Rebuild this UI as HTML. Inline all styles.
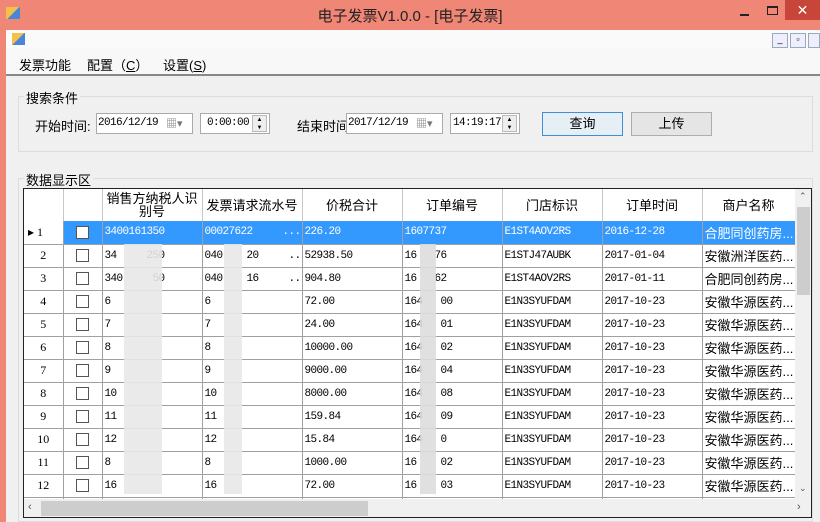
<!DOCTYPE html>
<html><head><meta charset="utf-8"><style>
*{margin:0;padding:0;box-sizing:border-box}
body{width:820px;height:522px;overflow:hidden;background:#f08676;font-family:"Liberation Sans","Noto Sans CJK SC",sans-serif;font-size:12px;position:relative;color:#000}
.a{position:absolute;white-space:nowrap}
.mono{font-family:"Liberation Mono","Noto Sans CJK SC",monospace;font-size:11px;letter-spacing:-0.6px}
table{border-collapse:collapse;table-layout:fixed}
td{height:23px;border-right:1px solid #a0a0a0;border-bottom:1px solid #a0a0a0;padding-left:2px;white-space:nowrap;overflow:hidden;font-family:"Liberation Mono","Noto Sans CJK SC",monospace;font-size:11px;letter-spacing:-0.6px;background:#fff}
td.rh{background:#fff;text-align:center;padding:0;font-family:"Liberation Serif",serif;font-size:12px;letter-spacing:0}
td.cb{text-align:center;padding:0}
.box{display:inline-block;width:13px;height:13px;border:1px solid #555;background:#fff;vertical-align:middle}
tr.sel td{background:#3399ff;color:#fff}
tr.sel td.rh{background:#fff;color:#000;text-align:left;padding-left:4px}
tr.sel td.cb{background:#3399ff}
td.nm{font-family:"Liberation Sans","Noto Sans CJK SC",sans-serif;font-size:13px;letter-spacing:0}
th{height:32px;border-right:1px solid #c8c8c8;font-weight:normal;font-size:13px;background:#fff;line-height:13px}
.blur{position:absolute;background:#e8e8e8;opacity:.9}
</style></head><body>
<div class="a" style="left:6px;top:7px;width:14px;height:12px;background:linear-gradient(135deg,#f4c04a 50%,#4a86d8 50%)"></div>
<div class="a" style="left:0;top:5px;width:820px;text-align:center;font-size:15px;color:#222">电子发票V1.0.0 - [电子发票]</div>
<div class="a" style="left:740px;top:14px;width:9px;height:2px;background:#222"></div>
<div class="a" style="left:767px;top:6px;width:11px;height:9px;border:1px solid #222;border-top-width:2px"></div>
<div class="a" style="left:785px;top:0;width:35px;height:20px;background:#c8453a;color:#fff;text-align:center;font-size:14px;line-height:20px">✕</div>
<div class="a" style="left:6px;top:30px;width:814px;height:492px;background:#f0f0f0"></div>
<div class="a" style="left:6px;top:30px;width:814px;height:19px;background:#fafafa"></div>
<div class="a" style="left:12px;top:33px;width:13px;height:12px;background:linear-gradient(135deg,#f4c04a 50%,#4a86d8 50%)"></div>
<div class="a" style="left:772px;top:33px;width:16px;height:15px;border:1px solid #9ab;background:#eef;font-size:9px;text-align:center">_</div>
<div class="a" style="left:790px;top:33px;width:16px;height:15px;border:1px solid #9ab;background:#eef;font-size:9px;text-align:center">▫</div>
<div class="a" style="left:808px;top:33px;width:12px;height:15px;border:1px solid #9ab;background:#eef"></div>
<div class="a" style="left:6px;top:49px;width:814px;height:27px;background:#f8f8f8;border-bottom:2px solid #888"></div>
<div class="a" style="left:19px;top:55px;font-size:13px">发票功能</div>
<div class="a" style="left:87px;top:55px;font-size:13px">配置（<u>C</u>）</div>
<div class="a" style="left:163px;top:55px;font-size:13px">设置(<u>S</u>)</div>
<div class="a" style="left:18px;top:96px;width:795px;height:56px;border:1px solid #dcdcdc"></div>
<div class="a" style="left:24px;top:88px;background:#f0f0f0;padding:0 2px;font-size:13px">搜索条件</div>
<div class="a" style="left:35px;top:116px;font-size:13px">开始时间:</div>
<div class="a mono" style="left:96px;top:113px;width:97px;height:21px;border:1px solid #aaa;background:#fff;padding:3px 0 0 1px">2016/12/19</div>
<div class="a" style="left:166px;top:115px;color:#777;font-size:11px">▦▾</div>
<div class="a mono" style="left:200px;top:113px;width:70px;height:21px;border:1px solid #aaa;background:#fff;padding:3px 0 0 6px">0:00:00</div>
<div class="a" style="left:252px;top:115px;width:15px;height:17px;border:1px solid #bbb;background:#eee;font-size:6px;line-height:8px;text-align:center">▲<br>▼</div>
<div class="a" style="left:297px;top:116px;font-size:13px">结束时间</div>
<div class="a mono" style="left:346px;top:113px;width:97px;height:21px;border:1px solid #aaa;background:#fff;padding:3px 0 0 1px">2017/12/19</div>
<div class="a" style="left:416px;top:115px;color:#777;font-size:11px">▦▾</div>
<div class="a mono" style="left:450px;top:113px;width:70px;height:21px;border:1px solid #aaa;background:#fff;padding:3px 0 0 2px">14:19:17</div>
<div class="a" style="left:502px;top:115px;width:15px;height:17px;border:1px solid #bbb;background:#eee;font-size:6px;line-height:8px;text-align:center">▲<br>▼</div>
<div class="a" style="left:542px;top:112px;width:81px;height:24px;border:1px solid #3c8fd8;background:#e6eef6;text-align:center;line-height:22px;font-size:13px">查询</div>
<div class="a" style="left:631px;top:112px;width:81px;height:24px;border:1px solid #adadad;background:#e5e5e5;text-align:center;line-height:22px;font-size:13px">上传</div>
<div class="a" style="left:18px;top:178px;width:795px;height:344px;border:1px solid #dcdcdc"></div>
<div class="a" style="left:24px;top:170px;background:#f0f0f0;padding:0 2px;font-size:13px">数据显示区</div>
<div class="a" style="left:23px;top:188px;width:789px;height:330px;border:1px solid #222;background:#fff;overflow:hidden">
<table style="width:771px">
<colgroup><col style="width:39px"><col style="width:39px"><col style="width:100px"><col style="width:100px"><col style="width:100px"><col style="width:100px"><col style="width:100px"><col style="width:100px"><col style="width:93px"></colgroup>
<tr><th></th><th></th><th>销售方纳税人识<br>别号</th><th>发票请求流水号</th><th>价税合计</th><th>订单编号</th><th>门店标识</th><th>订单时间</th><th>商户名称</th></tr>
<tr class="sel"><td class="rh">▸ 1</td><td class="cb"><span class="box"></span></td><td>3400161350</td><td>00027622 &nbsp;&nbsp;&nbsp;&nbsp;...</td><td>226.20</td><td>1607737</td><td>E1ST4AOV2RS</td><td>2016-12-28</td><td class="nm">合肥同创药房...</td></tr>
<tr><td class="rh">2</td><td class="cb"><span class="box"></span></td><td>34&nbsp;&nbsp;&nbsp;&nbsp;&nbsp;250</td><td>040&nbsp;&nbsp;&nbsp;&nbsp;20 &nbsp;&nbsp;&nbsp;&nbsp;...</td><td>52938.50</td><td>16&nbsp;&nbsp;&nbsp;76</td><td>E1STJ47AUBK</td><td>2017-01-04</td><td class="nm">安徽洲洋医药...</td></tr>
<tr><td class="rh">3</td><td class="cb"><span class="box"></span></td><td>340&nbsp;&nbsp;&nbsp;&nbsp;&nbsp;50</td><td>040&nbsp;&nbsp;&nbsp;&nbsp;16 &nbsp;&nbsp;&nbsp;&nbsp;...</td><td>904.80</td><td>16&nbsp;&nbsp;&nbsp;62</td><td>E1ST4AOV2RS</td><td>2017-01-11</td><td class="nm">合肥同创药房...</td></tr>
<tr><td class="rh">4</td><td class="cb"><span class="box"></span></td><td>6</td><td>6</td><td>72.00</td><td>164&nbsp;&nbsp;&nbsp;00</td><td>E1N3SYUFDAM</td><td>2017-10-23</td><td class="nm">安徽华源医药...</td></tr>
<tr><td class="rh">5</td><td class="cb"><span class="box"></span></td><td>7</td><td>7</td><td>24.00</td><td>164&nbsp;&nbsp;&nbsp;01</td><td>E1N3SYUFDAM</td><td>2017-10-23</td><td class="nm">安徽华源医药...</td></tr>
<tr><td class="rh">6</td><td class="cb"><span class="box"></span></td><td>8</td><td>8</td><td>10000.00</td><td>164&nbsp;&nbsp;&nbsp;02</td><td>E1N3SYUFDAM</td><td>2017-10-23</td><td class="nm">安徽华源医药...</td></tr>
<tr><td class="rh">7</td><td class="cb"><span class="box"></span></td><td>9</td><td>9</td><td>9000.00</td><td>164&nbsp;&nbsp;&nbsp;04</td><td>E1N3SYUFDAM</td><td>2017-10-23</td><td class="nm">安徽华源医药...</td></tr>
<tr><td class="rh">8</td><td class="cb"><span class="box"></span></td><td>10</td><td>10</td><td>8000.00</td><td>164&nbsp;&nbsp;&nbsp;08</td><td>E1N3SYUFDAM</td><td>2017-10-23</td><td class="nm">安徽华源医药...</td></tr>
<tr><td class="rh">9</td><td class="cb"><span class="box"></span></td><td>11</td><td>11</td><td>159.84</td><td>164&nbsp;&nbsp;&nbsp;09</td><td>E1N3SYUFDAM</td><td>2017-10-23</td><td class="nm">安徽华源医药...</td></tr>
<tr><td class="rh">10</td><td class="cb"><span class="box"></span></td><td>12</td><td>12</td><td>15.84</td><td>164&nbsp;&nbsp;&nbsp;0</td><td>E1N3SYUFDAM</td><td>2017-10-23</td><td class="nm">安徽华源医药...</td></tr>
<tr><td class="rh">11</td><td class="cb"><span class="box"></span></td><td>8</td><td>8</td><td>1000.00</td><td>16&nbsp;&nbsp;&nbsp;&nbsp;02</td><td>E1N3SYUFDAM</td><td>2017-10-23</td><td class="nm">安徽华源医药...</td></tr>
<tr><td class="rh">12</td><td class="cb"><span class="box"></span></td><td>16</td><td>16</td><td>72.00</td><td>16&nbsp;&nbsp;&nbsp;&nbsp;03</td><td>E1N3SYUFDAM</td><td>2017-10-23</td><td class="nm">安徽华源医药...</td></tr>
<tr><td class="rh"></td><td class="cb"></td><td></td><td></td><td></td><td></td><td></td><td></td><td></td></tr>
</table>
<div class="blur" style="left:100px;top:55px;width:38px;height:250px"></div>
<div class="blur" style="left:200px;top:55px;width:18px;height:250px"></div>
<div class="blur" style="left:396px;top:55px;width:16px;height:250px;background:#ddd"></div>
<div class="a" style="left:771px;top:0;width:17px;height:310px;background:#f0f0f0"></div>
<div class="a" style="left:775px;top:2px;font-size:9px;color:#555">⌃</div>
<div class="a" style="left:773px;top:18px;width:13px;height:88px;background:#cdcdcd"></div>
<div class="a" style="left:775px;top:294px;font-size:9px;color:#555">⌄</div>
<div class="a" style="left:0;top:310px;width:788px;height:19px;background:#f0f0f0"></div>
<div class="a" style="left:4px;top:312px;font-size:11px;color:#555">‹</div>
<div class="a" style="left:17px;top:312px;width:327px;height:15px;background:#cdcdcd"></div>
<div class="a" style="left:773px;top:312px;font-size:11px;color:#555">›</div>
</div>
</body></html>
